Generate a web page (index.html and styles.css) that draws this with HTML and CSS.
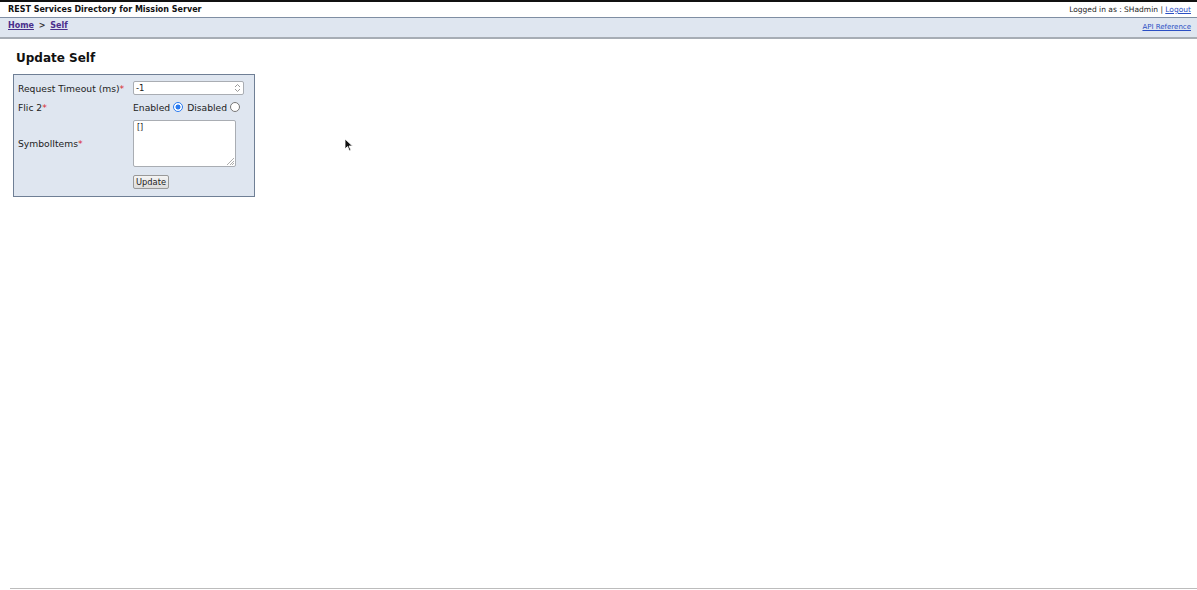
FILE: index.html
```html
<!DOCTYPE html>
<html>
<head>
<meta charset="utf-8">
<link rel="stylesheet" href="styles.css">
</head>
<body>
<div class="page">
  <div class="topbar">
    <span class="title">REST Services Directory for Mission Server</span>
    <span class="user">Logged in as : SHadmin | <a href="#" class="blue">Logout</a></span>
  </div>
  <div class="crumbbar">
    <span class="crumbs"><a href="#" class="visited">Home</a> &gt; <a href="#" class="visited">Self</a></span>
    <a href="#" class="blue apiref">API Reference</a>
  </div>
  <h2 class="heading">Update Self</h2>
  <div class="formbox">
    <div class="row r1">
      <div class="label">Request Timeout (ms)<span class="req">*</span></div>
      <div class="value">
        <div class="numinput"><span>-1</span><span class="spin"><svg width="7" height="10" viewBox="0 0 7 10"><path d="M1 4 L3.5 1.5 L6 4" fill="none" stroke="#999" stroke-width="1"/><path d="M1 6 L3.5 8.5 L6 6" fill="none" stroke="#999" stroke-width="1"/></svg></span></div>
      </div>
    </div>
    <div class="row r2">
      <div class="label">Flic 2<span class="req">*</span></div>
      <div class="value radios">
        <span>Enabled</span><span class="radio on"></span>
        <span>Disabled</span><span class="radio"></span>
      </div>
    </div>
    <div class="row r3">
      <div class="label">SymbolItems<span class="req">*</span></div>
      <div class="value">
        <div class="textarea">[]<svg class="grip" width="7" height="7" viewBox="0 0 7 7"><path d="M7 0 L0 7 M7 3 L3 7 M7 5 L5 7" stroke="#999" stroke-width="0.8"/></svg></div>
      </div>
    </div>
    <div class="row r4">
      <div class="label"></div>
      <div class="value"><span class="btn">Update</span></div>
    </div>
  </div>
  <div class="spacer"></div>
  <div class="footer"></div>
  <svg class="cursor" width="10" height="14" viewBox="0 0 10 14"><path d="M1 1 L1 11 L3.5 8.5 L5.5 13 L7 12.3 L5 8 L8.5 8 Z" fill="#111" stroke="#fff" stroke-width="0.8"/></svg>
</div>
</body>
</html>
```
FILE: styles.css
```css
html, body {
  margin: 0;
  padding: 0;
  background: #fff;
}
.page {
  position: relative;
  height: 590px;
  display: flex;
  flex-direction: column;
  font-family: "DejaVu Sans", Verdana, sans-serif;
  color: #111;
}
.topbar {
  border-top: 2px solid #111;
  height: 15px;
  display: flex;
  justify-content: space-between;
  align-items: center;
  padding: 0 6px 0 8px;
  border-bottom: 1px solid #7f8ea3;
}
.title {
  font-weight: bold;
  font-size: 8px;
}
.user {
  font-size: 7.5px;
  color: #222;
}
a.blue {
  color: #2b4fc4;
  text-decoration: underline;
}
a.visited {
  color: #4a2f8c;
  text-decoration: underline;
  font-weight: bold;
}
.crumbbar {
  background: #dfe6f0;
  height: 19px;
  border-bottom: 2px solid #a7adb5;
  display: flex;
  justify-content: space-between;
  align-items: flex-start;
  padding: 0 6px 0 8px;
}
.crumbs {
  font-size: 8px;
  font-weight: bold;
  color: #333;
  padding-top: 3px;
}
.crumbs a:first-child { margin-right: 2px; }
.crumbs a:last-child { margin-left: 2px; }
.apiref {
  font-size: 7px;
  padding-top: 5px;
}
.heading {
  margin: 11px 0 0 16px;
  font-size: 12px;
  font-weight: bold;
  height: 16px;
  line-height: 16px;
}
.formbox {
  margin: 8px 0 0 13px;
  width: 240px;
  height: 121px;
  background: #dfe6f0;
  border: 1.5px solid #6f7f95;
  font-size: 9.2px;
  color: #222;
  box-sizing: content-box;
}
.row {
  display: flex;
  align-items: center;
}
.label {
  width: 115px;
  padding-left: 4px;
}
.req { color: #d9262c; }
.r1 { margin-top: 6px; height: 14px; }
.r2 { margin-top: 5px; height: 14px; }
.r3 { margin-top: 5px; height: 49px; }
.r4 { margin-top: 7px; height: 14px; }
.numinput {
  width: 105px;
  height: 12px;
  background: #fff;
  border: 1px solid #a9adb3;
  border-radius: 2px;
  display: flex;
  justify-content: space-between;
  align-items: center;
  padding: 0 2px 0 2px;
  font-size: 8.5px;
}
.spin { display: flex; align-items: center; }
.radios {
  display: flex;
  align-items: center;
  gap: 3px;
}
.radios span:nth-child(3) { margin-left: 1px; }
.radio {
  display: inline-block;
  width: 8px;
  height: 8px;
  border-radius: 50%;
  border: 1px solid #777;
  background: #fff;
  box-sizing: content-box;
}
.radio.on {
  border-color: #2b7bf0;
  background: radial-gradient(circle, #2b7bf0 0 2.2px, #fff 2.8px);
}
.textarea {
  position: relative;
  width: 103px;
  height: 47px;
  background: #fff;
  border: 1px solid #a9adb3;
  border-radius: 2px;
  font-size: 8px;
  color: #222;
  padding: 2px 0 0 3px;
  box-sizing: border-box;
}
.grip {
  position: absolute;
  right: 1px;
  bottom: 1px;
}
.btn {
  display: inline-block;
  font-size: 8.3px;
  padding: 1px 2px;
  border: 1px solid #999;
  border-radius: 2px;
  background: linear-gradient(#f4f4f4, #dcdcdc);
}
.spacer { flex: 1; }
.footer {
  margin-left: 10px;
  height: 1px;
  background: #bcbcbc;
  margin-bottom: 1px;
}
.cursor {
  position: absolute;
  left: 344px;
  top: 138px;
}
```
